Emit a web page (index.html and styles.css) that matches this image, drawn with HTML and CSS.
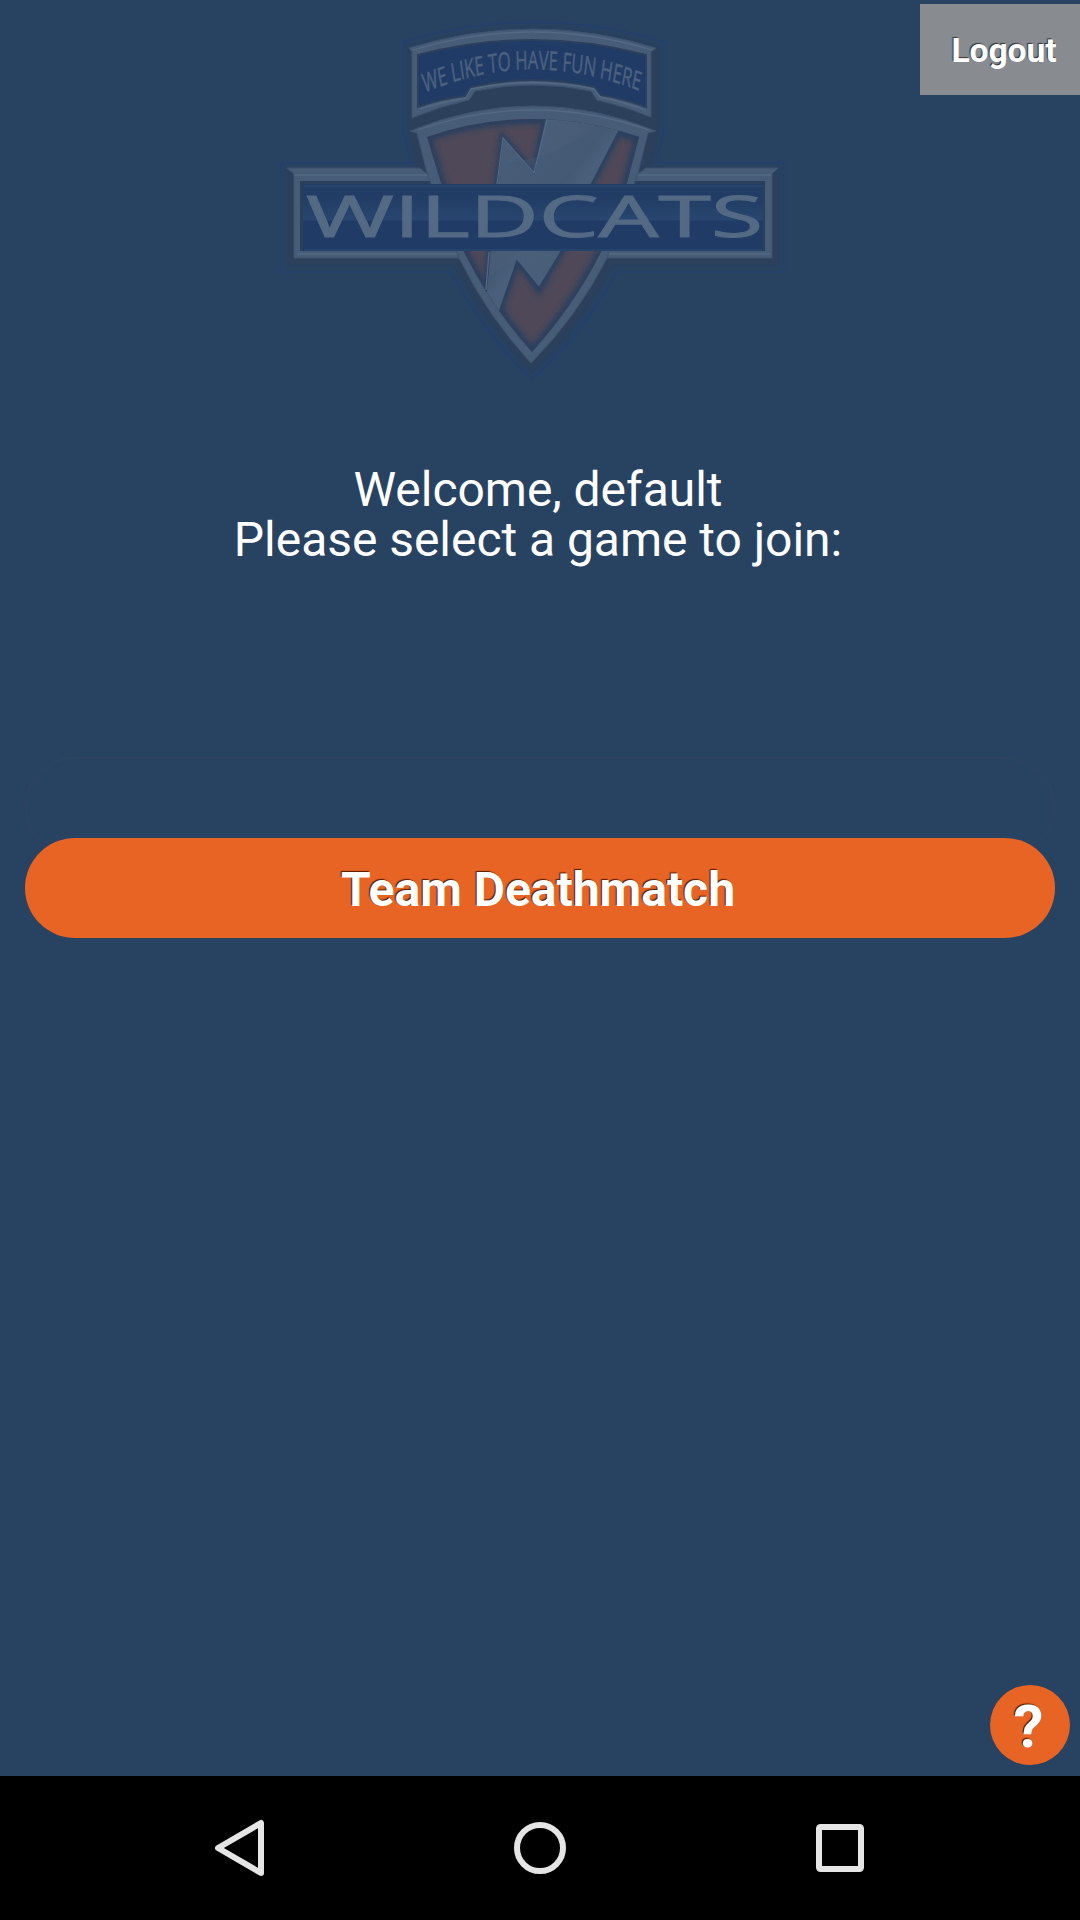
FILE: index.html
```html
<!DOCTYPE html>
<html lang="en">
<head>
<meta charset="utf-8">
<title>Wildcats</title>
<link rel="stylesheet" href="styles.css">
</head>
<body>
<main class="screen">
  <button class="logout">Logout</button>
  <svg class="logo" viewBox="270 10 526 376" role="img" aria-label="Wildcats">
    <defs>
      <linearGradient id="bar" x1="0" y1="0" x2="0" y2="1">
        <stop offset="0" stop-color="#213d66"/><stop offset=".2" stop-color="#213d66"/>
        <stop offset=".54" stop-color="#28466f"/><stop offset=".55" stop-color="#203b65"/>
        <stop offset="1" stop-color="#203c66"/>
      </linearGradient>
      <linearGradient id="steel" x1="0" y1="0" x2="1" y2="1">
        <stop offset="0" stop-color="#4c607b"/><stop offset=".45" stop-color="#445974"/>
        <stop offset=".5" stop-color="#4a5f7a"/><stop offset="1" stop-color="#405873"/>
      </linearGradient>
      <filter id="soft" x="-10%" y="-10%" width="120%" height="120%"><feGaussianBlur stdDeviation="2.5"/></filter>
      <clipPath id="field"><path d="M427 137Q533 101 639 137L627 183L601 252Q575 304 532 352Q492 308 464 252L441 183Z"/></clipPath>
    </defs>
    <path class="halo" d="M403 42Q533 2 664 42V130L656 163H784V272H617Q580 337 532 379Q487 337 451 272H281V163H411L403 130Z"/>
    <path class="shade" d="M408 47Q533 7 659 47V128L650 168H778V265H612Q580 328 532 372Q488 328 455 265H287V168H417L408 128Z"/>

    <!-- name bar frame -->
    <path class="frame" d="M287 168H420L427 174H638L646 168H778L772 174V258H294V174Z"/>
    <path class="shine" d="M294 175H430M636 175H771M297 254H462M604 254H770"/>
    <path class="rim" d="M300 181H765V251H300Z"/>

    <!-- shield -->
    <path class="frame" d="M410 131Q533 81 656 131L648 133L638 173L607 258Q577 317 531 363Q488 317 459 258L427 173L417 133Z"/>
    <path class="shine" d="M417 130Q533 90 649 130"/>
    <g clip-path="url(#field)">
      <path class="red" d="M420 110H645V360H420Z"/>
      <path class="inset" d="M427 137Q533 101 639 137L627 183L601 252Q575 304 532 352Q492 308 464 252L441 183Z"/>
      <path class="bolt-shade" d="M547 112L534 173L503 138L497 184L486 292L500 310L517 261L539 290L561 252L592 183L619 131L640 137V100Z"/>
      <path class="bolt" d="M547 112L534 173L503 138L497 184L486 292L475 290V320H500V310L517 261L539 288L561 252L592 183L619 131L645 139V100Z"/>
      <path class="glint" d="M503 164C535 158 545 156 568 144S590 124 608 121L600 110H547L534 173L517 154ZM490 275L516 259L530 250H489Z"/>
      <path class="shine" d="M547 119L534 173L503 138L497 184M489 252L486 290"/>
    </g>

    <!-- motto banner -->
    <path class="frame" d="M409 48Q533 10 656 48L651 52V117Q624 106 597 100L591 91Q533 79 475 91L469 100Q440 106 412 118V52Z"/>
    <path class="shine" d="M413 50Q533 14 652 50M419 109Q440 103 465 98L471 89Q533 76 594 89L600 97Q624 102 645 110"/>
    <path class="panel" d="M418 55Q533 25 646 55V107Q622 98 601 95L595 87Q533 73 470 87L465 96Q442 98 418 107Z"/>
    <g transform="scale(.72 1)">
      <path id="motto" class="guide" d="M589.5 93Q739 46 895 93"/>
      <text class="motto"><textPath href="#motto" textLength="303" lengthAdjust="spacingAndGlyphs">WE LIKE TO HAVE FUN HERE</textPath></text>
    </g>

    <!-- name bar panel -->
    <path fill="url(#bar)" d="M303 184H763V251H303Z"/>
    <path class="edge" d="M304 186H762M304 250H762"/>
    <text class="name" x="306" y="237" textLength="457" lengthAdjust="spacingAndGlyphs">WILDCATS</text>
  </svg>
  <h1 class="welcome">Welcome, default<br>Please select a game to join:</h1>
  <section class="games">
    <div class="slot"></div>
    <button class="game">Team Deathmatch</button>
  </section>
  <button class="help">?</button>
</main>
<nav class="navbar">
  <svg viewBox="0 0 60 60"><path d="M51 5V55L8 30Z"/></svg>
  <svg viewBox="0 0 60 60"><circle cx="30" cy="30" r="23"/></svg>
  <svg viewBox="0 0 60 60"><rect x="9" y="9" width="42" height="42" rx="1.500"/></svg>
</nav>
</body>
</html>
```
FILE: styles.css
```css
* { box-sizing: border-box; }
body {
  margin: 0;
  width: 1080px;
  height: 1920px;
  display: flex;
  flex-direction: column;
  background: #000;
  font-family: Roboto, sans-serif;
  overflow: hidden;
}
button { border: 0; padding: 0; font: inherit; color: #fff; }
.screen {
  position: relative;
  height: 1776px;
  display: flex;
  flex-direction: column;
  background: #284262;
  color: #fff;
}
.logout {
  position: absolute;
  top: 4px;
  right: 0;
  width: 160px;
  height: 91px;
  padding: 2px 0 0 8px;
  background: #888b8f;
  font-size: 33.5px;
  font-weight: 700;
  text-shadow: -1px -1px 1px #333;
}
.logo { width: 526px; height: 376px; margin: 10px 0 0 270px; }
.halo { fill: none; stroke: #24416c; stroke-width: 2; }
.shade { fill: #2d405b; stroke: #29405e; stroke-width: 3; }
.frame { fill: #475c77; stroke: #3c526e; stroke-width: 1; }
.shine { fill: none; stroke: #536984; stroke-width: 1.3; }
.red { fill: #4e4858; }
.inset { fill: none; stroke: #2b405e; stroke-width: 10; filter: url(#soft); }
.bolt-shade { fill: none; stroke: #2a415f; stroke-width: 7; filter: url(#soft); }
.bolt { fill: url(#steel); stroke: #284262; stroke-width: 1.5; }
.glint { fill: #50657f; opacity: .3; }
.panel { fill: #203b66; stroke: #2c405d; stroke-width: 2; }
.rim { fill: #2a3f5c; }
.edge { fill: none; stroke: #28466f; stroke-width: 1.5; }
.guide { fill: none; }
.motto { font: 26px "Open Sans", sans-serif; fill: #4c627f; stroke: #4c627f; stroke-width: .5; }
.name { font: 56px "Open Sans", sans-serif; fill: #536984; stroke: #536984; stroke-width: 1; }
.welcome {
  margin: 79px 0 0;
  padding-right: 4px;
  font-size: 48px;
  font-weight: 400;
  line-height: 50px;
  letter-spacing: -.04px;
  text-align: center;
}
.games { display: grid; margin: 192px 25px 0; }
.slot, .game { grid-area: 1 / 1; height: 100px; border-radius: 50px; }
.slot { border: 1px solid #32445e; }
.game {
  margin-top: 81px;
  padding-right: 4px;
  padding-top: 3px;
  background: #e86424;
  font-size: 48px;
  font-weight: 700;
  text-shadow: -1px -1px 1px #501c00;
}
.help {
  position: absolute;
  right: 10px;
  bottom: 11px;
  width: 80px;
  height: 80px;
  padding: 3px 3px 0 0;
  border-radius: 50%;
  background: #e86424;
  font-size: 60px;
  font-weight: 700;
  text-shadow: -1px -1px 1px #501c00;
}
.navbar {
  height: 144px;
  display: flex;
  justify-content: center;
  align-items: center;
  gap: 240px;
}
.navbar svg { width: 60px; height: 60px; fill: none; stroke: #e5e5e5; stroke-width: 6; stroke-linejoin: round; }
```
